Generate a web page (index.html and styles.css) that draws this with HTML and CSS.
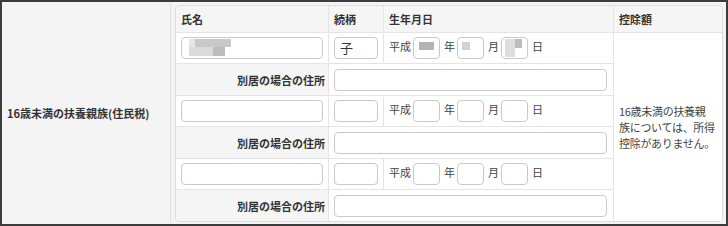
FILE: index.html
```html
<!DOCTYPE html>
<html lang="ja">
<head>
    <meta charset="UTF-8">
    <title>扶養親族</title>
    <link rel="stylesheet" href="styles.css">
</head>
<body>
    <div class="frame">
        <div class="side-label">16歳未満の扶養親族(住民税)</div>
        <div class="table-wrap">
            <table class="dep-table">
                <tr class="head">
                    <th class="c-name">氏名</th>
                    <th class="c-rel">続柄</th>
                    <th class="c-birth">生年月日</th>
                    <th class="c-amount">控除額</th>
                </tr>
                <tr class="row-main">
                    <td><span class="field f-name"><span class="mosaic m-name"><i class="g1"></i><i class="g2"></i><i class="g3"></i><i class="g4"></i></span></span></td>
                    <td><span class="field f-rel">子</span></td>
                    <td class="birth">平成<span class="field f-num"><span class="mosaic m-year"></span></span>年<span class="field f-num"><span class="mosaic m-month"></span></span>月<span class="field f-num"><span class="mosaic m-day"><i class="g2"></i><i class="g1"></i></span></span>日</td>
                    <td class="amount" rowspan="6">16歳未満の扶養親<br>族については、所得<br>控除がありません。</td>
                </tr>
                <tr class="row-addr">
                    <th class="addr-label">別居の場合の住所</th>
                    <td colspan="2"><span class="field f-addr"></span></td>
                </tr>
                <tr class="row-main">
                    <td><span class="field f-name"></span></td>
                    <td><span class="field f-rel"></span></td>
                    <td class="birth">平成<span class="field f-num"></span>年<span class="field f-num"></span>月<span class="field f-num"></span>日</td>
                </tr>
                <tr class="row-addr">
                    <th class="addr-label">別居の場合の住所</th>
                    <td colspan="2"><span class="field f-addr"></span></td>
                </tr>
                <tr class="row-main">
                    <td><span class="field f-name"></span></td>
                    <td><span class="field f-rel"></span></td>
                    <td class="birth">平成<span class="field f-num"></span>年<span class="field f-num"></span>月<span class="field f-num"></span>日</td>
                </tr>
                <tr class="row-addr last">
                    <th class="addr-label">別居の場合の住所</th>
                    <td colspan="2"><span class="field f-addr"></span></td>
                </tr>
            </table>
        </div>
    </div>
</body>
</html>
```

FILE: styles.css
```css
body, html {
    margin: 0;
    padding: 0;
    background-color: #fff;
    font-family: "Noto Sans CJK JP", "Liberation Sans", sans-serif;
    font-size: 11px;
    color: #333;
}
.frame {
    width: 724px;
    height: 222px;
    border: 2px solid #3c3c3c;
    background-color: #f4f4f4;
    display: flex;
}
.side-label {
    width: 163px;
    padding-left: 5px;
    border-right: 1px solid #e2e2e2;
    font-weight: bold;
    display: flex;
    align-items: center;
}
.table-wrap {
    padding: 3px 3px 3px 4px;
}
.dep-table {
    width: 548px;
    border: 1px solid #dcdcdc;
    border-radius: 4px;
    border-collapse: separate;
    border-spacing: 0;
    overflow: hidden;
    table-layout: fixed;
}
.dep-table th,
.dep-table td {
    padding: 0 5px;
    border-top: 1px solid #e4e4e4;
    border-left: 1px solid #e4e4e4;
    text-align: left;
    white-space: nowrap;
}
.dep-table .head th {
    border-top: none;
    height: 26px;
    background-color: #f5f5f5;
    font-weight: bold;
}
.dep-table th:first-child,
.dep-table td:first-child {
    border-left: none;
}
.c-name { width: 142px; }
.c-rel { width: 44px; }
.c-birth { width: 219px; }
.c-amount { width: 98px; }
.row-main td {
    height: 30px;
    background-color: #fff;
}
.row-addr th,
.row-addr td {
    height: 31px;
    background-color: #fff;
}
.row-addr .addr-label {
    background-color: #f5f5f5;
    text-align: right;
    padding-right: 3px;
}
.birth {
    color: #444;
}
.amount {
    background-color: #fff;
    line-height: 16px;
    padding: 0 2px 0 5px !important;
    color: #444;
    letter-spacing: -0.3px;
}
.field {
    display: inline-block;
    vertical-align: middle;
    box-sizing: border-box;
    height: 22px;
    border: 1px solid #c9c9c9;
    border-radius: 4px;
    background-color: #fff;
    position: relative;
    line-height: 20px;
}
.f-name { width: 142px; }
.f-rel { width: 44px; padding-left: 5px; font-size: 13px; }
.f-addr { width: 273px; }
.f-num {
    width: 27px;
    margin: 0 4px 0 2px;
}
.mosaic {
    position: absolute;
    display: block;
}
.mosaic i {
    display: block;
    float: left;
}
.m-name {
    left: 7px;
    top: 1px;
    width: 42px;
    height: 17px;
}
.m-name .g1 { width: 6px; height: 8px; background: #e6e6e6; }
.m-name .g2 { width: 36px; height: 8px; background: #c8c8c8; }
.m-name .g3 { width: 24px; height: 9px; background: #dadada; }
.m-name .g4 { width: 12px; height: 9px; background: #bdbdbd; }
.m-year {
    left: 5px;
    top: 4px;
    width: 15px;
    height: 8px;
    background: #b4b4b4;
}
.m-month {
    left: 4px;
    top: 4px;
    width: 8px;
    height: 8px;
    background: #d2d2d2;
}
.m-day {
    left: 3px;
    top: 1px;
    width: 17px;
    height: 18px;
}
.m-day .g2 { width: 10px; height: 18px; background: #dedede; }
.m-day .g1 { width: 7px; height: 9px; background: #bdbdbd; }
```
